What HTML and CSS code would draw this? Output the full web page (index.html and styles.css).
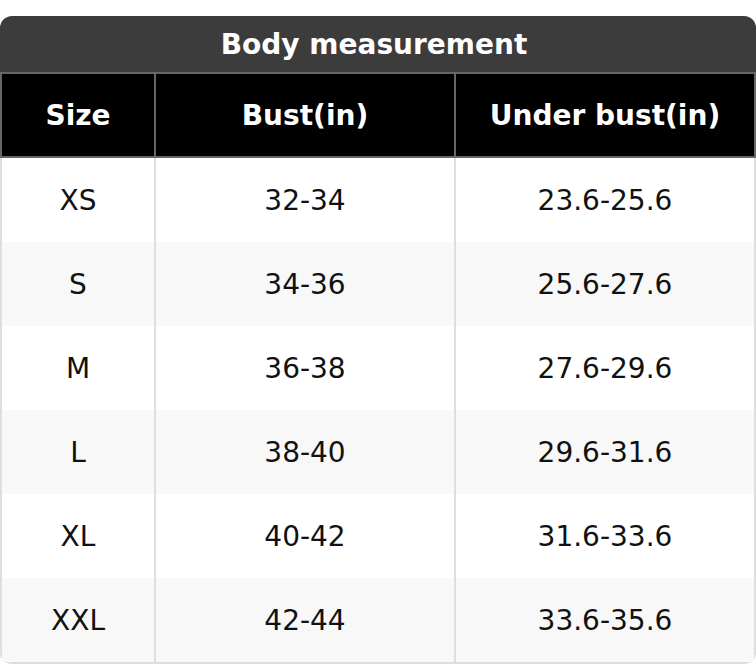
FILE: index.html
```html
<!DOCTYPE html>
<html>
<head>
<meta charset="utf-8">
<link rel="stylesheet" href="styles.css">
</head>
<body>
<div class="card">
  <div class="title">Body measurement</div>
  <div class="head">
    <div class="hcell">Size</div>
    <div class="hcell">Bust(in)</div>
    <div class="hcell">Under bust(in)</div>
  </div>
  <div class="rows">
    <div class="row"><div class="cell">XS</div><div class="cell">32-34</div><div class="cell">23.6-25.6</div></div>
    <div class="row alt"><div class="cell">S</div><div class="cell">34-36</div><div class="cell">25.6-27.6</div></div>
    <div class="row"><div class="cell">M</div><div class="cell">36-38</div><div class="cell">27.6-29.6</div></div>
    <div class="row alt"><div class="cell">L</div><div class="cell">38-40</div><div class="cell">29.6-31.6</div></div>
    <div class="row"><div class="cell">XL</div><div class="cell">40-42</div><div class="cell">31.6-33.6</div></div>
    <div class="row alt"><div class="cell">XXL</div><div class="cell">42-44</div><div class="cell">33.6-35.6</div></div>
  </div>
</div>
</body>
</html>
```
FILE: styles.css
```css
html, body {
  margin: 0;
  padding: 0;
  background: #fff;
}
body {
  font-family: "DejaVu Sans", Verdana, sans-serif;
}
.card {
  margin-top: 16px;
  width: 756px;
  border-radius: 12px 12px 10px 10px;
  overflow: hidden;
}
.title {
  height: 56px;
  background: #3c3c3c;
  color: #fff;
  font-weight: bold;
  font-size: 28px;
  padding-right: 8px;
  display: flex;
  align-items: center;
  justify-content: center;
}
.head {
  display: grid;
  grid-template-columns: 154px 300px 298px;
  border: 2px solid #666;
  background: #000;
}
.hcell {
  height: 82px;
  display: flex;
  align-items: center;
  justify-content: center;
  color: #fff;
  font-weight: bold;
  font-size: 28px;
  box-sizing: border-box;
  border-right: 2px solid #666;
}
.hcell:last-child {
  border-right: 0;
}
.rows {
  border: 2px solid #dedede;
  border-top: 0;
  border-radius: 0 0 10px 10px;
}
.row {
  display: grid;
  grid-template-columns: 154px 300px 298px;
  background: #fff;
}
.row.alt {
  background: #f8f8f8;
}
.cell {
  height: 84px;
  display: flex;
  align-items: center;
  justify-content: center;
  color: #111;
  font-size: 28px;
  box-sizing: border-box;
  border-right: 2px solid #dedede;
}
.cell:last-child {
  border-right: 0;
}
```
